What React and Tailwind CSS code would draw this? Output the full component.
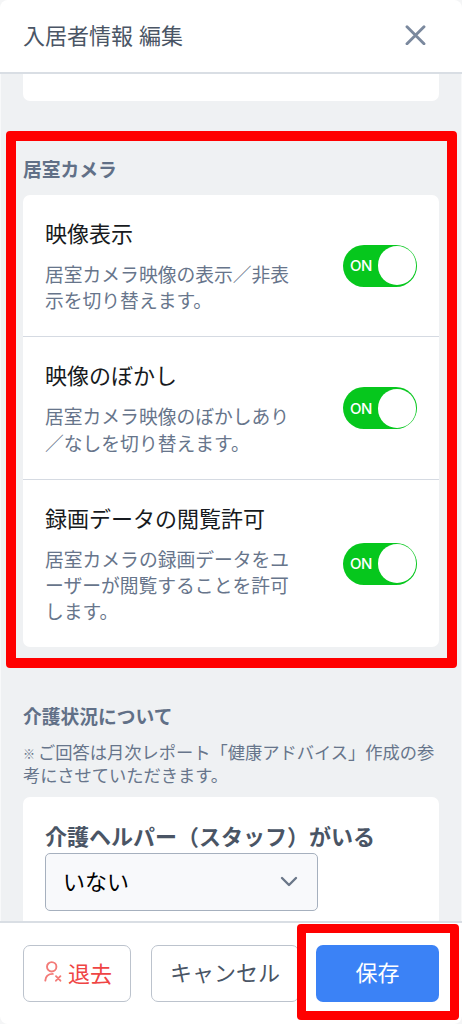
import React, { useState } from 'react';

const cameraSettings = [
  {
    id: 'view',
    title: '映像表示',
    lines: ['居室カメラ映像の表示／非表', '示を切り替えます。'],
    rowClass: 'h-[142px] border-b',
  },
  {
    id: 'blur',
    title: '映像のぼかし',
    lines: ['居室カメラ映像のぼかしあり', '／なしを切り替えます。'],
    rowClass: 'h-[143px] border-b',
  },
  {
    id: 'record',
    title: '録画データの閲覧許可',
    lines: ['居室カメラの録画データをユ', 'ーザーが閲覧することを許可', 'します。'],
    rowClass: 'h-[167px]',
  },
];

function Toggle({ checked, onChange }) {
  return (
    <button
      type="button"
      role="switch"
      aria-checked={checked}
      onClick={onChange}
      className={`flex h-[42px] w-[74px] shrink-0 items-center justify-between rounded-full pr-px pl-[7px] ${
        checked ? 'bg-[#06c71d]' : 'flex-row-reverse bg-gray-400'
      }`}
    >
      <span className="font-['Inter',sans-serif] text-[15px] leading-none font-medium tracking-[-0.4px] text-white">
        {checked ? 'ON' : 'OFF'}
      </span>
      <span className="h-[39px] w-[38px] rounded-full bg-white" />
    </button>
  );
}

function SettingRow({ title, lines, rowClass, checked, onChange }) {
  return (
    <div className={`flex items-center justify-between border-[#d5dae2] pr-[22px] pl-[22px] ${rowClass}`}>
      <div className="pb-px">
        <h3 className="-mt-px text-[22px] leading-[33px] text-[#171a20]">{title}</h3>
        <p className="mt-[12px] text-[18.8px] leading-[26.3px] text-[#67758b]">
          {lines.map((line) => (
            <span key={line} className="block whitespace-nowrap">{line}</span>
          ))}
        </p>
      </div>
      <Toggle checked={checked} onChange={onChange} />
    </div>
  );
}

function UserRemoveIcon() {
  return (
    <svg width="18" height="22" viewBox="0 0 18 22" fill="none" stroke="#f37b78" strokeWidth="1.9" strokeLinecap="round">
      <circle cx="7.7" cy="5.8" r="4.7" />
      <path d="M1.3 19.6C1.6 15.6 4.2 12.9 8.8 12.9" />
      <path d="M12 15.2l4.4 4.5M16.4 15.2L12 19.7" />
    </svg>
  );
}

export default function App() {
  const [settings, setSettings] = useState({ view: true, blur: true, record: true });

  const toggle = (id) => setSettings((prev) => ({ ...prev, [id]: !prev[id] }));

  return (
    <div className="relative h-[1024px] w-[462px] overflow-hidden bg-[#f4f5f6] font-['Noto_Sans_CJK_JP',sans-serif]">
      <div className="flex h-full flex-col overflow-hidden rounded-lg bg-white">
        {/* Header */}
        <header className="flex h-[74px] shrink-0 items-center justify-between border-b-2 border-[#d9dee4] pr-[36px] pl-[23px]">
          <h1 className="pb-[3px] text-[22px] leading-[33px] text-[#4a5565] [word-spacing:1px]">入居者情報 編集</h1>
          <button type="button" aria-label="閉じる" className="pb-[2px]">
            <svg width="21" height="20" viewBox="0 0 21 20" stroke="#7b899e" strokeWidth="2.9" strokeLinecap="round">
              <path d="M2 1.7l17 17M19 1.7l-17 17" />
            </svg>
          </button>
        </header>

        {/* Scroll area */}
        <main className="flex h-[847px] shrink-0 flex-col overflow-hidden border-x border-[#f8f9fa] bg-[#eff1f3] px-[22px]">
          <div className="h-[27px] shrink-0 rounded-b-[7px] bg-white" />

          <section className="mt-[54px] shrink-0">
            <h2 className="text-[18.75px] leading-[28px] font-bold text-[#617087]">居室カメラ</h2>
            <div className="mt-[12px] rounded-[7px] bg-white">
              {cameraSettings.map((item) => (
                <SettingRow
                  key={item.id}
                  title={item.title}
                  lines={item.lines}
                  rowClass={item.rowClass}
                  checked={settings[item.id]}
                  onChange={() => toggle(item.id)}
                />
              ))}
            </div>
          </section>

          <section className="mt-[55px] shrink-0">
            <h2 className="text-[18.75px] leading-[28px] font-bold text-[#617087]">介護状況について</h2>
            <p className="mt-[10px] text-[17.25px] leading-[23px] whitespace-nowrap text-[#67758b]">
              <span className="block">
                <span className="mr-[3px] inline-block text-[12px] leading-none font-bold">※</span>ご回答は月次レポート「健康アドバイス」作成の参
              </span>
              <span className="block">考にさせていただきます。</span>
            </p>
            <div className="mt-[11px] h-[150px] rounded-t-[7px] bg-white px-[22px] pt-[22px]">
              <h3 className="mb-px text-[22px] leading-[33px] font-bold whitespace-nowrap text-[#4a5565]">
                介護ヘルパー（スタッフ）がいる
              </h3>
              <button
                type="button"
                className="flex h-[58px] w-[273px] items-center justify-between rounded-[5px] border border-[#a6b0be] bg-[#f8f9fb] pr-[19px] pl-[17px] text-[22px] leading-none text-black"
              >
                <span className="pb-[4px]">いない</span>
                <svg width="18" height="12" viewBox="0 0 18 12" fill="none" stroke="#6b7789" strokeWidth="2.4" strokeLinecap="round" strokeLinejoin="round">
                  <path d="M2 2l7 7 7-7" />
                </svg>
              </button>
            </div>
          </section>
        </main>

        {/* Footer actions */}
        <footer className="flex flex-1 items-start border-t-2 border-[#d9dee4] px-[23px] pt-[22px] text-[22px] leading-none">
          <button
            type="button"
            className="flex h-[57px] w-[108px] items-center rounded-[7px] border border-[#bcc3cd] pb-[4px] pl-[20px] text-[#ef4444]"
          >
            <UserRemoveIcon />
            <span className="ml-[6px]">退去</span>
          </button>
          <button
            type="button"
            className="ml-[20px] h-[57px] w-[148px] rounded-[7px] border border-[#bcc3cd] pb-[5px] text-[#4a5565]"
          >
            キャンセル
          </button>
          <button type="button" className="ml-[17px] h-[57px] w-[123px] rounded-[7px] bg-[#3b82f6] pb-[5px] text-white">
            保存
          </button>
        </footer>
      </div>

      {/* Highlight frames */}
      <div className="pointer-events-none absolute top-[131px] left-[6px] h-[537px] w-[451px] rounded-[4px] border-10 border-[#ff0000]" />
      <div className="pointer-events-none absolute top-[924px] left-[297px] h-[96px] w-[162px] rounded-[4px] border-[9px] border-[#ff0000]" />
    </div>
  );
}
